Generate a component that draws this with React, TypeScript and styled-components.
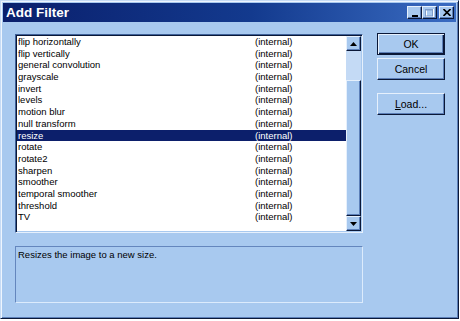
import * as React from 'react';
import styled, { createGlobalStyle } from 'styled-components';

const GlobalStyle = createGlobalStyle`
  html, body {
    margin: 0;
    padding: 0;
    background: #ffffff;
  }
  body {
    font-family: "Liberation Sans", Arial, sans-serif;
  }
`;

const face = '#a8c9ef';
const dark = '#0a1838';
const shade = '#5c7fb8';
const light = '#dcebfc';

const Window = styled.div`
  width: 459px;
  height: 319px;
  box-sizing: border-box;
  display: flex;
  flex-direction: column;
  background: ${face};
  border: 1px solid;
  border-color: #c6dbf5 ${dark} ${dark} #c6dbf5;
  box-shadow: inset 1px 1px #eef5fe, inset -1px -1px ${shade};
  padding: 2px;
`;

const TitleBar = styled.div`
  height: 19px;
  display: flex;
  align-items: center;
  padding: 0 2px 0 3px;
  background: linear-gradient(to right, #0a1f6c 0%, #133a8e 55%, #3a6cc2 100%);
  color: #ffffff;
`;

const Title = styled.span`
  flex: 1;
  font-size: 13.5px;
  font-weight: bold;
  line-height: 19px;
`;

const CaptionGroup = styled.div`
  display: flex;
  align-items: center;
`;

const CaptionButton = styled.div<{ $gap?: boolean }>`
  width: 15px;
  height: 13px;
  box-sizing: border-box;
  margin-left: ${p => (p.$gap ? '2px' : '0')};
  background: ${face};
  border: 1px solid;
  border-color: #e6f0fc ${dark} ${dark} #e6f0fc;
  box-shadow: inset -1px -1px ${shade};
  display: flex;
  align-items: center;
  justify-content: center;
`;

const Body = styled.div`
  flex: 1;
  display: flex;
  gap: 14px;
  padding: 12px 0 0 12px;
`;

const LeftColumn = styled.div`
  width: 348px;
  display: flex;
  flex-direction: column;
  gap: 13px;
`;

const ListBox = styled.div`
  height: 199px;
  box-sizing: border-box;
  display: flex;
  background: #ffffff;
  border: 1px solid;
  border-color: #3f6199 #e6f0fc #e6f0fc #3f6199;
  padding: 1px;
  box-shadow: inset 1px 1px ${dark}, inset -1px -1px ${face};
`;

const Rows = styled.div`
  flex: 1;
  overflow: hidden;
`;

const Row = styled.div<{ $selected?: boolean }>`
  display: grid;
  grid-template-columns: 237px 1fr;
  padding-left: 1px;
  height: 11.7px;
  line-height: 11.7px;
  font-size: 9.5px;
  white-space: nowrap;
  color: ${p => (p.$selected ? '#ffffff' : '#000000')};
  background: ${p => (p.$selected ? '#0c1f6b' : 'transparent')};
`;

const ScrollBar = styled.div`
  width: 15px;
  display: flex;
  flex-direction: column;
  background: #c4daf5;
`;

const ScrollButton = styled.div`
  height: 15px;
  box-sizing: border-box;
  background: ${face};
  border: 1px solid;
  border-color: #e6f0fc ${dark} ${dark} #e6f0fc;
  box-shadow: inset -1px -1px ${shade};
  display: flex;
  align-items: center;
  justify-content: center;
`;

const Track = styled.div`
  flex: 1;
  display: flex;
  flex-direction: column;
  justify-content: flex-end;
`;

const Thumb = styled.div`
  height: 136px;
  box-sizing: border-box;
  background: ${face};
  border: 1px solid;
  border-color: #e6f0fc ${dark} ${dark} #e6f0fc;
  box-shadow: inset -1px -1px ${shade};
`;

const Description = styled.div`
  height: 57px;
  box-sizing: border-box;
  border: 1px solid;
  border-color: #6486bd ${light} ${light} #6486bd;
  padding: 2px;
  font-size: 9.5px;
  line-height: 12px;
  color: #000000;
`;

const RightColumn = styled.div`
  width: 68px;
  display: flex;
  flex-direction: column;
  margin-top: -1px;
`;

const Button = styled.div<{ $default?: boolean; $space?: number }>`
  height: 22px;
  box-sizing: border-box;
  margin-top: ${p => p.$space ?? 0}px;
  display: flex;
  align-items: center;
  justify-content: center;
  background: ${face};
  font-size: 10.5px;
  color: #000000;
  border: 1px solid;
  border-color: ${p =>
    p.$default ? dark : `#e6f0fc ${dark} ${dark} #e6f0fc`};
  box-shadow: ${p =>
    p.$default
      ? `inset 1px 1px #e6f0fc, inset -1px -1px ${dark}, inset -2px -2px ${shade}`
      : `inset -1px -1px ${shade}`};
  u {
    text-decoration: underline;
  }
`;

const filters = [
  'flip horizontally',
  'flip vertically',
  'general convolution',
  'grayscale',
  'invert',
  'levels',
  'motion blur',
  'null transform',
  'resize',
  'rotate',
  'rotate2',
  'sharpen',
  'smoother',
  'temporal smoother',
  'threshold',
  'TV',
];

const Arrow: React.FC<{ up?: boolean }> = ({ up }) => (
  <svg width="7" height="4" viewBox="0 0 7 4">
    <polygon points={up ? '3.5,0 7,4 0,4' : '0,0 7,0 3.5,4'} fill="#000" />
  </svg>
);

const App: React.FC = () => {
  const [selected, setSelected] = React.useState('resize');
  return (
    <>
      <GlobalStyle />
      <Window>
        <TitleBar>
          <Title>Add Filter</Title>
          <CaptionGroup>
            <CaptionButton>
              <svg width="8" height="8" viewBox="0 0 8 8">
                <rect x="1" y="6" width="6" height="2" fill="#000" />
              </svg>
            </CaptionButton>
            <CaptionButton>
              <svg width="9" height="8" viewBox="0 0 9 8">
                <rect x="1.5" y="0.5" width="7" height="7" fill="none" stroke="#ffffff" />
                <rect x="0.5" y="0" width="7" height="7" fill="none" stroke="#7f9cc8" />
                <rect x="0.5" y="0" width="7" height="1.5" fill="#7f9cc8" />
              </svg>
            </CaptionButton>
            <CaptionButton $gap>
              <svg width="8" height="7" viewBox="0 0 8 7">
                <path d="M0.5 0 L7.5 7 M7.5 0 L0.5 7" stroke="#000" strokeWidth="1.6" />
              </svg>
            </CaptionButton>
          </CaptionGroup>
        </TitleBar>
        <Body>
          <LeftColumn>
            <ListBox>
              <Rows>
                {filters.map(name => (
                  <Row
                    key={name}
                    $selected={selected === name}
                    onClick={() => setSelected(name)}
                  >
                    <span>{name}</span>
                    <span>(internal)</span>
                  </Row>
                ))}
              </Rows>
              <ScrollBar>
                <ScrollButton>
                  <Arrow up />
                </ScrollButton>
                <Track>
                  <Thumb />
                </Track>
                <ScrollButton>
                  <Arrow />
                </ScrollButton>
              </ScrollBar>
            </ListBox>
            <Description>Resizes the image to a new size.</Description>
          </LeftColumn>
          <RightColumn>
            <Button $default>OK</Button>
            <Button $space={3}>Cancel</Button>
            <Button $space={13}>
              <span>
                <u>L</u>oad...
              </span>
            </Button>
          </RightColumn>
        </Body>
      </Window>
    </>
  );
};

export default App;
